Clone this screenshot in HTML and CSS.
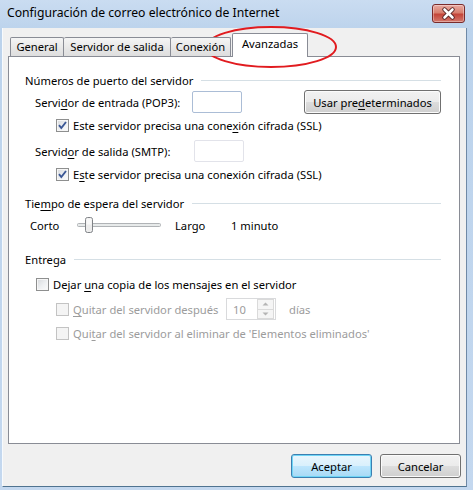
FILE: index.html
```html
<!DOCTYPE html>
<html lang="es">
<head>
<meta charset="utf-8">
<title>Configuración de correo electrónico de Internet</title>
<link rel="stylesheet" href="styles.css">
</head>
<body>
<div class="window">
  <div class="titlebar">
    <span class="title">Configuración de correo electrónico de Internet</span>
    <div class="close">
      <svg width="33" height="19" viewBox="0 0 33 19">
        <path d="M12.5 5.5 L20.5 13.5 M20.5 5.5 L12.5 13.5" stroke="#4a1c1c" stroke-width="4.4" stroke-linecap="round"/>
        <path d="M12.5 5.5 L20.5 13.5 M20.5 5.5 L12.5 13.5" stroke="#ffffff" stroke-width="2.6" stroke-linecap="round"/>
      </svg>
    </div>
  </div>
  <div class="client">
    <div class="tabs">
      <div class="tab t-general">General</div>
      <div class="tab t-salida">Servidor de salida</div>
      <div class="tab t-conexion">Conexión</div>
      <div class="tab tab-active t-avanzadas">Avanzadas</div>
    </div>
    <div class="panel">
      <div class="gtitle g1"><span>Números de puerto del servidor</span><i class="rule"></i></div>
      <div class="row r-pop">
        <span class="port-label">Servi<u>d</u>or de entrada (POP3):</span>
        <span class="textbox"></span>
        <button class="btn btn-defaults">Usar pre<u>d</u>eterminados</button>
      </div>
      <div class="row r-check r-ssl1">
        <span class="cb"><svg width="11" height="11" viewBox="0 0 11 11"><path d="M2 5.2 L4.3 8 L9 2" fill="none" stroke="#3b5795" stroke-width="1.9"/></svg></span>
        <span class="cb-text">Este servidor precisa una cone<u>x</u>ión cifrada (SSL)</span>
      </div>
      <div class="row r-smtp">
        <span class="port-label">Servid<u>o</u>r de salida (SMTP):</span>
        <span class="textbox textbox-idle"></span>
      </div>
      <div class="row r-check r-ssl2">
        <span class="cb"><svg width="11" height="11" viewBox="0 0 11 11"><path d="M2 5.2 L4.3 8 L9 2" fill="none" stroke="#3b5795" stroke-width="1.9"/></svg></span>
        <span class="cb-text">E<u>s</u>te servidor precisa una conexión cifrada (SSL)</span>
      </div>

      <div class="gtitle g2"><span>Tie<u>m</u>po de espera del servidor</span><i class="rule"></i></div>
      <div class="row r-slider">
        <span class="sl-short">Corto</span>
        <svg class="slider" width="84" height="20" viewBox="0 0 84 20">
          <rect x="0.5" y="8.5" width="83" height="3" rx="1" fill="#e7eaea" stroke="#b0b3b6"/>
          <line x1="1" y1="12.5" x2="83" y2="12.5" stroke="#ffffff"/>
          <rect x="8.5" y="2.5" width="7" height="15" rx="2" fill="#ececec" stroke="#7f8286"/>
          <rect x="9.5" y="3.5" width="5" height="6" fill="#f8f8f8"/>
        </svg>
        <span class="sl-long">Largo</span>
        <span class="sl-value">1 minuto</span>
      </div>

      <div class="gtitle g3"><span>Entrega</span><i class="rule"></i></div>
      <div class="row r-check r-keep">
        <span class="cb"></span>
        <span class="cb-text">Dejar <u>u</u>na copia de los mensajes en el servidor</span>
      </div>
      <div class="row r-check r-remove">
        <span class="cb cb-disabled"></span>
        <span class="cb-text disabled remove-label"><u>Q</u>uitar del servidor después</span>
        <span class="spinner">
          <span class="spin-value">10</span>
          <span class="spin-buttons">
            <span class="spin-btn"><svg width="7" height="4" viewBox="0 0 7 4"><path d="M0.5 3.5 L3.5 0.5 L6.5 3.5 Z" fill="#b4b4b4"/></svg></span>
            <span class="spin-btn"><svg width="7" height="4" viewBox="0 0 7 4"><path d="M0.5 0.5 L3.5 3.5 L6.5 0.5 Z" fill="#b4b4b4"/></svg></span>
          </span>
        </span>
        <span class="disabled days">días</span>
      </div>
      <div class="row r-check r-remove2">
        <span class="cb cb-disabled"></span>
        <span class="cb-text disabled">Qui<u>t</u>ar del servidor al eliminar de 'Elementos eliminados'</span>
      </div>
    </div>
    <div class="buttons">
      <button class="btn btn-primary">Aceptar</button>
      <button class="btn">Cancelar</button>
    </div>
  </div>
  <svg class="annotation" width="134" height="44" viewBox="0 0 134 44">
    <ellipse cx="67" cy="22" rx="65" ry="20" fill="none" stroke="#e11b1f" stroke-width="2"/>
  </svg>
</div>
</body>
</html>
```
FILE: styles.css
```css
* { box-sizing: border-box; }

body {
  margin: 0;
  font-family: "Noto Sans", "Open Sans", sans-serif;
  font-size: 11.2px;
  color: #000;
  background: #c3d7ee;
}

u { text-decoration: underline; text-underline-offset: 2px; }

.window {
  position: relative;
  width: 473px;
  height: 490px;
  overflow: hidden;
  background: linear-gradient(#cadcf1 0px, #bcd3ec 30px, #c4d8ef 100%);
}

.titlebar {
  height: 28px;
  display: flex;
  align-items: center;
  padding: 0 8px 2px 7px;
}

.title {
  flex: 1;
  font-size: 12.2px;
  line-height: 16px;
  color: #000;
}

.close {
  width: 33px;
  height: 19px;
  border: 1px solid #7a2b2b;
  border-radius: 3px;
  background: linear-gradient(#e9aaa1 0%, #d8806f 45%, #c4463a 55%, #d4786c 100%);
  box-shadow: inset 0 0 0 1px rgba(255,255,255,0.35);
  display: flex;
  margin-top: 1px;
}
.close svg { margin: -1px; }

.client {
  margin-left: 2px;
  width: 465px;
  height: 459px;
  background: #f0f0f0;
  border-left: 1px solid #f7fafd;
  border-right: 1px solid #6f89a6;
  border-bottom: 1px solid #4f7390;
  padding: 5px 5px 0 5px;
}

.tabs {
  display: flex;
  align-items: flex-end;
  height: 24px;
  margin-left: 2px;
  position: relative;
  z-index: 1;
}

.tab {
  height: 19px;
  margin-bottom: 1px;
  border: 1px solid #898c95;
  border-bottom: none;
  border-radius: 2px 2px 0 0;
  background: linear-gradient(#f5f5f5, #e6e6e6 60%, #dedede);
  text-align: center;
  line-height: 17px;
  white-space: nowrap;
}
.t-general { width: 54px; }
.t-salida { width: 107px; border-left: none; }
.t-conexion { width: 60px; border-left: none; }
.t-avanzadas { width: 76px; margin-left: 1px; }

.tab-active {
  height: 24px;
  margin-bottom: 0;
  background: #fff;
  line-height: 20px;
}

.panel {
  width: 452px;
  height: 388px;
  margin-top: -1px;
  background: #fff;
  border: 1px solid #898c95;
  padding: 15px 18px 0 16px;
}

.gtitle {
  display: flex;
  align-items: center;
  height: 16px;
  white-space: nowrap;
}
.rule {
  flex: 1;
  height: 1px;
  margin-left: 8px;
  background: #d5dfe5;
}
.g1 { margin-top: 0; }
.g2 { margin-top: 13px; }
.g3 { margin-top: 16px; }

.row {
  display: flex;
  align-items: center;
  white-space: nowrap;
}

.r-pop { margin-top: 2px; height: 24px; padding-left: 10px; }
.r-smtp { margin-top: 6px; height: 24px; padding-left: 10px; }
.r-ssl1 { margin-top: 3px; height: 16px; padding-left: 31px; }
.r-ssl2 { margin-top: 3px; height: 16px; padding-left: 31px; }
.r-slider { margin-top: 4px; height: 20px; padding-left: 5px; }
.r-keep { margin-top: 9px; height: 16px; padding-left: 11px; }
.r-remove { margin-top: 5px; height: 24px; padding-left: 31px; }
.r-remove2 { margin-top: 4px; height: 16px; padding-left: 31px; }

.port-label { width: 159px; }

.textbox {
  width: 50px;
  height: 22px;
  background: #fff;
  border: 1px solid #abbdd6;
  border-radius: 2px;
}
.textbox-idle { border-color: #e2e3ea; }

.btn {
  font-family: "Noto Sans", "Open Sans", sans-serif;
  font-size: 11.2px;
  color: #000;
  height: 24px;
  padding: 0;
  border: 1px solid #707070;
  border-radius: 3px;
  background: linear-gradient(#f2f2f2 0%, #ebebeb 50%, #dddddd 50%, #cfcfcf 100%);
  box-shadow: inset 0 0 0 1px #fbfbfb;
  white-space: nowrap;
  flex-shrink: 0;
}
.btn-defaults { width: 137px; margin-left: 62px; }

.cb {
  width: 13px;
  height: 13px;
  flex-shrink: 0;
  border: 1px solid #8e8f8f;
  background: linear-gradient(135deg, #d7d9dc 0%, #eef0f2 55%, #fbfbfb 100%);
  box-shadow: inset 0 0 0 1px #f6f6f6;
  display: flex;
}
.cb svg { display: block; }
.cb-disabled {
  border-color: #c3c3c3;
  background: #f4f4f4;
  box-shadow: none;
}
.cb-text { margin-left: 4px; }
.disabled { color: #9c9c9c; }

.sl-short { width: 47px; }
.slider { flex-shrink: 0; }
.sl-long { width: 56px; margin-left: 14px; }

.remove-label { width: 153px; }

.spinner {
  width: 50px;
  height: 22px;
  border: 1px solid #d9dadc;
  background: #fff;
  display: flex;
  align-items: center;
  padding: 0 1px 0 6px;
  flex-shrink: 0;
}
.spin-value { flex: 1; color: #9c9c9c; }
.spin-buttons {
  width: 17px;
  height: 20px;
  display: flex;
  flex-direction: column;
}
.spin-btn {
  flex: 1;
  border: 1px solid #dadada;
  background: #f5f5f5;
  display: flex;
  align-items: center;
  justify-content: center;
}
.spin-btn + .spin-btn { border-top: none; }
.spin-btn svg { display: block; }
.days { margin-left: 13px; }

.buttons {
  display: flex;
  justify-content: flex-end;
  gap: 8px;
  margin-top: 10px;
}
.buttons .btn { width: 81px; }
.btn-primary {
  border-color: #3c7fb1;
  background: linear-gradient(#eaf6fd 0%, #d9f0fc 50%, #bee6fd 50%, #a7d9f5 100%);
  box-shadow: inset 0 0 0 1px #6fd5f6;
}

.annotation {
  position: absolute;
  left: 204px;
  top: 25px;
}
```
